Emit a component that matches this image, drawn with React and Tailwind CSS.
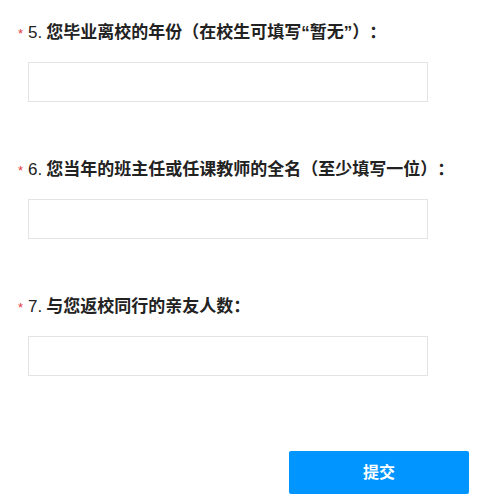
export default function App() {
  const qs = [
    { n: "5.", t: "您毕业离校的年份（在校生可填写“暂无”）：" },
    { n: "6.", t: "您当年的班主任或任课教师的全名（至少填写一位）：" },
    { n: "7.", t: "与您返校同行的亲友人数：" },
  ];
  return (
    <div
      className="w-[498px] h-[504px] bg-white pt-[21px] pl-[18px] [text-spacing-trim:space-all]"
      style={{ fontFamily: '"Liberation Sans", "Noto Sans CJK SC", sans-serif' }}
    >
      {qs.map((q, i) => (
        <div key={i} className={i < 2 ? "mb-[56px]" : ""}>
          <div className="flex items-center h-[24px] text-[17px] text-[#222]">
            <span className="w-[10px] text-[#e4393c] text-[13px] leading-none">*</span>
            <span className="font-normal">{q.n}</span>
            <span className="font-bold ml-[4px]">{q.t}</span>
          </div>
          <div className="ml-[10px] mt-[17px] w-[400px] h-[40px] border border-[#e3e3e3] bg-white"></div>
        </div>
      ))}
      <div className="flex justify-end pr-[29px] mt-[75px]">
        <button className="w-[180px] h-[43px] bg-[#0095ff] rounded-[2px] text-white text-[16px] font-bold">
          提交
        </button>
      </div>
    </div>
  );
}
